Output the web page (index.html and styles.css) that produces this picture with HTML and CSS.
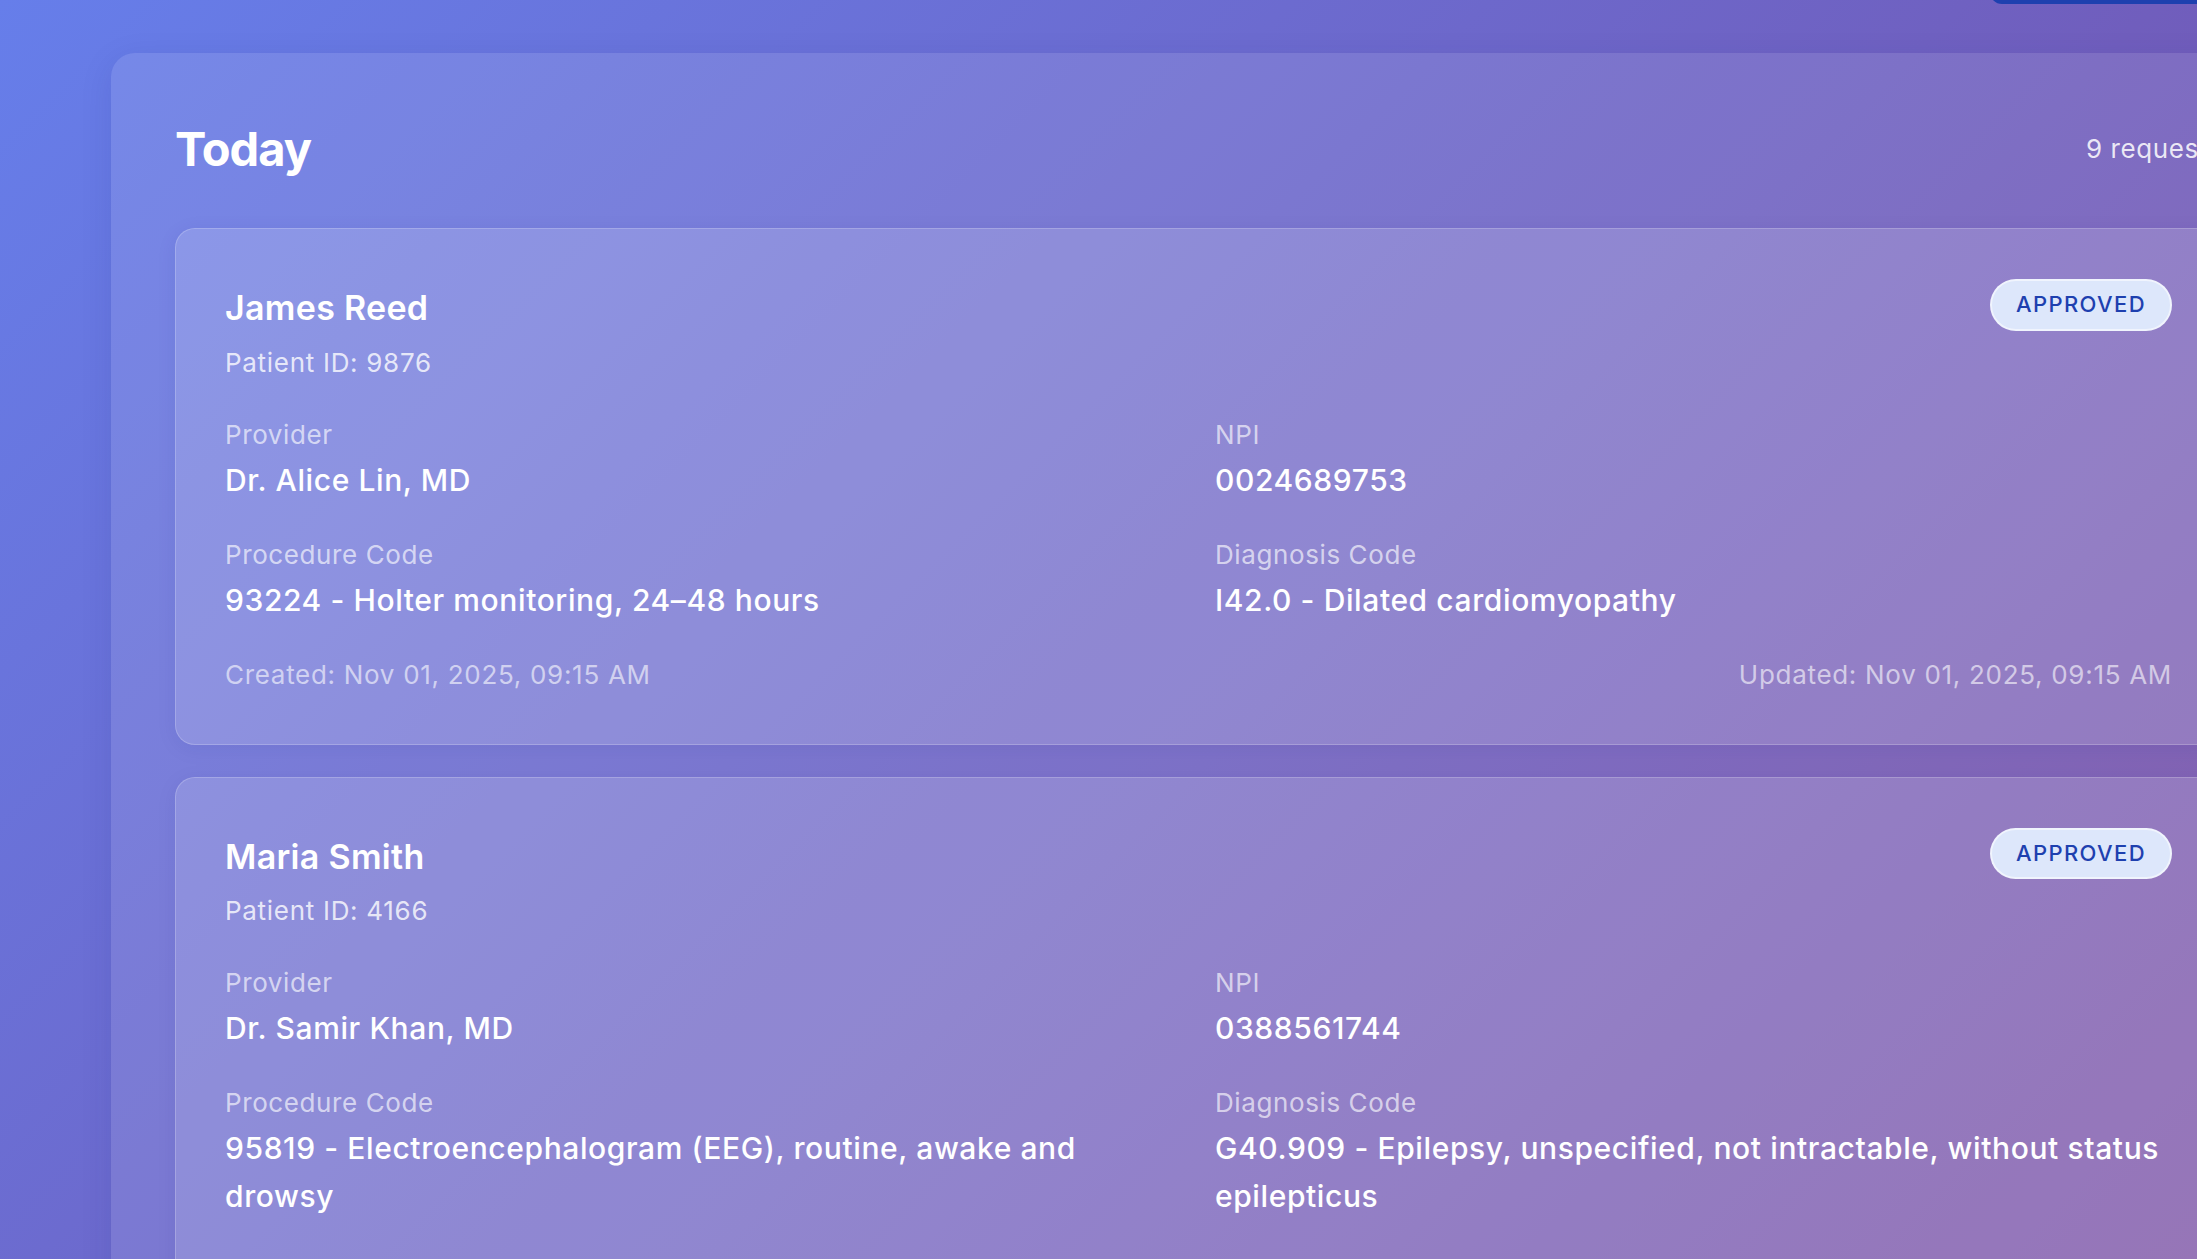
FILE: index.html
```html
<!DOCTYPE html>
<html lang="en">
<head>
    <meta charset="UTF-8">
    <meta name="viewport" content="width=device-width, initial-scale=1.0">
    <title>Prior Authorization Requests</title>
    <link rel="stylesheet" href="styles.css">
</head>
<body>

    <div class="page">

        <div class="topbar">
            <button class="new-btn">New Request</button>
        </div>

        <section class="panel">
            <div class="panel-head">
                <h2>Today</h2>
                <span class="count">9 requests</span>
            </div>

            <div class="cards">
                <article class="card">
                    <div class="card-head">
                        <div>
                            <h3 class="patient">James Reed</h3>
                            <p class="patient-id">Patient ID: 9876</p>
                        </div>
                        <span class="badge">APPROVED</span>
                    </div>
                    <div class="fields">
                        <div>
                            <div class="label">Provider</div>
                            <div class="value">Dr. Alice Lin, MD</div>
                        </div>
                        <div>
                            <div class="label">NPI</div>
                            <div class="value">0024689753</div>
                        </div>
                        <div>
                            <div class="label">Procedure Code</div>
                            <div class="value">93224 - Holter monitoring, 24–48 hours</div>
                        </div>
                        <div>
                            <div class="label">Diagnosis Code</div>
                            <div class="value">I42.0 - Dilated cardiomyopathy</div>
                        </div>
                    </div>
                    <div class="card-foot">
                        <span>Created: Nov 01, 2025, 09:15 AM</span>
                        <span>Updated: Nov 01, 2025, 09:15 AM</span>
                    </div>
                </article>

                <article class="card">
                    <div class="card-head">
                        <div>
                            <h3 class="patient">Maria Smith</h3>
                            <p class="patient-id">Patient ID: 4166</p>
                        </div>
                        <span class="badge">APPROVED</span>
                    </div>
                    <div class="fields">
                        <div>
                            <div class="label">Provider</div>
                            <div class="value">Dr. Samir Khan, MD</div>
                        </div>
                        <div>
                            <div class="label">NPI</div>
                            <div class="value">0388561744</div>
                        </div>
                        <div>
                            <div class="label">Procedure Code</div>
                            <div class="value">95819 - Electroencephalogram (EEG), routine, awake and drowsy</div>
                        </div>
                        <div>
                            <div class="label">Diagnosis Code</div>
                            <div class="value">G40.909 - Epilepsy, unspecified, not intractable, without status epilepticus</div>
                        </div>
                    </div>
                    <div class="card-foot">
                        <span>Created: Nov 01, 2025, 08:40 AM</span>
                        <span>Updated: Nov 01, 2025, 08:52 AM</span>
                    </div>
                </article>
            </div>
        </section>

    </div>

</body>
</html>
```

FILE: styles.css
```css
body {
    font-family: 'Inter', 'Noto Sans', sans-serif;
    background: linear-gradient(135deg, #667eea 0%, #764ba2 100%);
    margin: 0;
    height: 100vh;
    overflow: hidden;
    line-height: 1.7;
    color: #fff;
}

.page {
    width: 2175px;
    margin: -44px 0 0 111px;
}

.topbar {
    display: flex;
    justify-content: flex-end;
    margin-bottom: 49px;
}

.new-btn {
    width: 296px;
    height: 48px;
    border: none;
    border-radius: 12px;
    background-color: #1e40af;
    color: #fff;
    font-family: inherit;
    font-size: 24px;
}

.panel {
    background-color: rgba(255, 255, 255, 0.1);
    border-radius: 24px;
    padding: 67px 64px 64px;
    box-shadow: 0 8px 32px rgba(31, 38, 135, 0.12);
}

.panel-head {
    display: flex;
    justify-content: space-between;
    align-items: center;
    margin-bottom: 51px;
}

.panel-head h2 {
    margin: 0;
    font-size: 47px;
    font-weight: 700;
    line-height: 1.22;
    letter-spacing: -1px;
}

.count {
    font-size: 26px;
    line-height: 1.5;
    letter-spacing: 0.6px;
    color: rgba(255, 255, 255, 0.85);
}

.cards {
    display: flex;
    flex-direction: column;
    gap: 32px;
}

.card {
    background-color: rgba(255, 255, 255, 0.15);
    border: 1px solid rgba(255, 255, 255, 0.2);
    border-radius: 20px;
    padding: 50px 49px 46px;
    box-shadow: 0 4px 20px rgba(31, 38, 135, 0.08);
}

.card-head {
    display: flex;
    justify-content: space-between;
    align-items: flex-start;
}

.patient {
    margin: 0;
    font-size: 34px;
    font-weight: 600;
    letter-spacing: 0.3px;
}

.patient-id {
    margin: 4px 0 0;
    font-size: 26px;
    letter-spacing: 0.7px;
    color: rgba(255, 255, 255, 0.8);
}

.badge {
    padding: 5px 24px;
    border: 2px solid rgba(255, 255, 255, 0.55);
    border-radius: 999px;
    background-color: #dde7fb;
    color: #1e40af;
    font-size: 22px;
    font-weight: 500;
    letter-spacing: 1.4px;
}

.fields {
    display: grid;
    grid-template-columns: 1fr 1fr;
    column-gap: 33px;
    row-gap: 30px;
    margin-top: 29px;
}

.label {
    font-size: 26px;
    line-height: 42px;
    letter-spacing: 0.6px;
    color: rgba(255, 255, 255, 0.65);
}

.value {
    font-size: 30px;
    font-weight: 500;
    line-height: 48px;
    letter-spacing: 0.6px;
}

.card-foot {
    display: flex;
    justify-content: space-between;
    margin-top: 29px;
    font-size: 26px;
    letter-spacing: 0.7px;
    color: rgba(255, 255, 255, 0.6);
}
```
